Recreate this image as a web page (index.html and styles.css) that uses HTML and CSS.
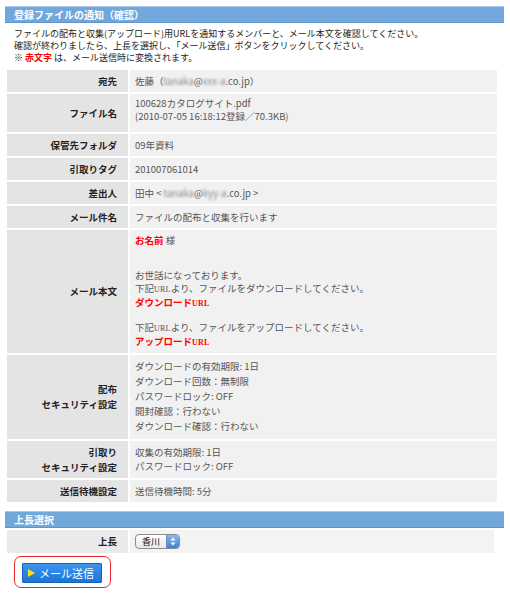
FILE: index.html
```html
<!DOCTYPE html>
<html lang="ja">
<head>
<meta charset="utf-8">
<link rel="stylesheet" href="styles.css">
</head>
<body>
<div class="page">
  <div class="bar">登録ファイルの通知（確認）</div>
  <div class="intro">
    <p>ファイルの配布と収集(アップロード)用URLを通知するメンバーと、メール本文を確認してください。</p>
    <p>確認が終わりましたら、上長を選択し、「メール送信」ボタンをクリックしてください。</p>
    <p>※ <b class="red">赤文字</b> は、メール送信時に変換されます。</p>
  </div>
  <table class="info">
    <tr class="r1"><th>宛先</th><td>佐藤（<span class="blur">tanaka</span>@<span class="blur">xxx-a</span>.co.jp）</td></tr>
    <tr class="r2"><th>ファイル名</th><td><div class="l13">100628カタログサイト.pdf</div><div class="l13">(2010-07-05 16:18:12登録／70.3KB)</div></td></tr>
    <tr class="r1"><th>保管先フォルダ</th><td>09年資料</td></tr>
    <tr class="r1"><th>引取りタグ</th><td>201007061014</td></tr>
    <tr class="r1"><th>差出人</th><td>田中 &lt; <span class="blur">tanaka</span>@<span class="blur">kyy-a</span>.co.jp &gt;</td></tr>
    <tr class="r1"><th>メール件名</th><td>ファイルの配布と収集を行います</td></tr>
    <tr class="body"><th>メール本文</th><td>
      <p class="p1"><b class="red">お名前</b> 様</p>
      <p class="p2">お世話になっております。<br>下記<span class="url">URL</span>より、ファイルをダウンロードしてください。<br><b class="red">ダウンロード<span class="url">URL</span></b></p>
      <p>下記<span class="url">URL</span>より、ファイルをアップロードしてください。<br><b class="red">アップロード<span class="url">URL</span></b></p>
    </td></tr>
    <tr class="sec"><th>配布<br>セキュリティ設定</th><td>ダウンロードの有効期限: 1日<br>ダウンロード回数：無制限<br>パスワードロック: OFF<br>開封確認：行わない<br>ダウンロード確認：行わない</td></tr>
    <tr class="sec2"><th>引取り<br>セキュリティ設定</th><td>収集の有効期限: 1日<br>パスワードロック: OFF</td></tr>
    <tr class="r1"><th>送信待機設定</th><td>送信待機時間: 5分</td></tr>
  </table>
  <div class="bar bar2">上長選択</div>
  <table class="boss">
    <tr><th>上長</th><td><span class="select"><span class="sel-text">香川</span><span class="sel-btn"><svg width="6" height="9" viewBox="0 0 6 9"><path d="M3 0.5 L5.5 3.5 L0.5 3.5 Z M3 8.5 L5.5 5.5 L0.5 5.5 Z" fill="#fff"/></svg></span></span></td></tr>
  </table>
  <div class="btn-wrap">
    <span class="btn"><span class="tri"></span>メール送信</span>
  </div>
</div>
</body>
</html>
```

FILE: styles.css
```css
html, body { margin: 0; padding: 0; background: #fff; }
body {
  font-family: "Noto Sans CJK JP", "Liberation Sans", sans-serif;
  color: #333;
}
.page { padding-left: 5px; width: 499px; }
.bar {
  margin-top: 6px;
  height: 17px;
  box-sizing: border-box;
  background: #72a7dc;
  border-top: 1px solid #a9c9ea;
  border-bottom: 1px solid #5f95cc;
  color: #fff;
  font-weight: bold;
  font-size: 10px;
  line-height: 15px;
  padding-left: 9px;
}
.intro { margin: 5px 0 4px 9px; font-size: 9px; line-height: 12px; color: #222; }
.intro p { margin: 0; white-space: nowrap; }
.red { color: #f00; font-weight: bold; }
.info, .boss {
  border-collapse: separate;
  border-spacing: 2px;
  width: 494px;
  margin-left: 0;
}
.info th, .boss th {
  width: 110px;
  background: #e4e4e4;
  text-align: right;
  font-size: 9.5px;
  font-weight: bold;
  color: #222;
  padding: 0 11px 0 0;
  line-height: 15px;
  vertical-align: middle;
}
.info td, .boss td {
  background: #f1f1f1;
  font-size: 9.5px;
  color: #555;
  padding: 0 0 0 5px;
  line-height: 13px;
  vertical-align: middle;
}
.r1 td, .r1 th { height: 22px; }
.r2 td { height: 38px; padding-bottom: 6px; box-sizing: border-box; }
.l13 { line-height: 13px; }
.body td { padding-top: 4px; padding-bottom: 4px; vertical-align: top; }
.body p { margin: 0; }
.body .p1 { margin-bottom: 22px; }
.body .p2 { margin-bottom: 11px; }
.url { font-family: "Liberation Serif", serif; font-size: 8px; letter-spacing: 0.2px; }
.red .url { font-size: 8px; }
.sec td { line-height: 15px; padding-top: 4px; padding-bottom: 5px; }
.sec2 td { line-height: 14px; padding-top: 4px; padding-bottom: 5px; }
.blur { filter: blur(1.3px); color: #8a8a8a; }
.bar2 { margin-top: 7px; }
.boss { width: 491px; }
.boss th { background: #eaeaea; height: 23px; }
.boss td { background: #f3f3f3; }
.select {
  display: inline-flex;
  align-items: stretch;
  width: 45px;
  height: 15px;
  box-sizing: border-box;
  border: 1px solid #8c8c8c;
  border-radius: 4px;
  background: linear-gradient(#ffffff, #e8e8e8);
  overflow: hidden;
  vertical-align: middle;
  margin-top: -1px;
}
.sel-text { flex: 1; font-size: 9px; line-height: 13px; padding-left: 6px; color: #111; }
.sel-btn {
  width: 12px;
  background: linear-gradient(#8ab9ef, #3a7fd6);
  border-left: 1px solid #6a8fbf;
  display: flex; align-items: center; justify-content: center;
}
.btn-wrap {
  display: inline-block;
  margin: 1px 0 0 9px;
  padding: 6px 8px 4px 7px;
  border: 1.5px solid #e8282d;
  border-radius: 7px;
}
.btn {
  display: flex;
  align-items: center;
  width: 80px;
  height: 20px;
  box-sizing: border-box;
  background: linear-gradient(#3c95ee, #1a76dc);
  border: 1px solid #1762b6;
  color: #fff;
  font-size: 11px;
  padding-left: 5px;
  border-radius: 1px;
}
.tri {
  width: 0; height: 0;
  border-left: 7px solid #ffe000;
  border-top: 4px solid transparent;
  border-bottom: 4px solid transparent;
  margin-right: 4px;
}
```
